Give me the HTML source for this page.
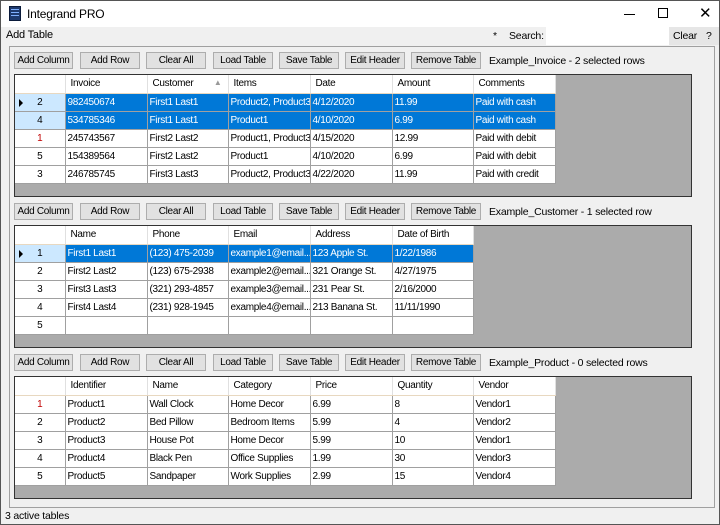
<!DOCTYPE html><html><head><style>
*{box-sizing:border-box;margin:0;padding:0}
body{width:720px;height:525px;background:#f0f0f0;font-family:"Liberation Sans",sans-serif;font-size:10.5px;color:#000;position:relative;overflow:hidden;border:1px solid #555;letter-spacing:-0.2px}
.a{position:absolute}
.title{left:0;top:0;width:718px;height:26px;background:#fff}
.btn{position:absolute;height:17px;border:1px solid #adadad;background:#e1e1e1;text-align:center;line-height:15px;font-size:10px;white-space:nowrap;overflow:hidden;letter-spacing:-0.3px}
.grid{position:absolute;left:13px;width:678px;height:123px;background:#ababab;border:1px solid #333;overflow:hidden}
table{border-collapse:collapse;table-layout:fixed;background:#fff}
td{height:18px;border-right:1px solid #a0a0a0;border-bottom:1px solid #a0a0a0;padding:0 0 0 2px;white-space:nowrap;overflow:hidden;font-size:10px;letter-spacing:-0.3px}
tr.h td{background:#fff;border-bottom:1px solid #e8d8c0;padding-left:5px;border-right:1px solid #e0e0e0}
td.rh{text-align:center;padding:0;background:#fff;position:relative}
tr.s td{background:#0078d7;color:#fff}
tr.s td.rh{background:#cce8ff;color:#000}
.red{color:#c00000}
.arr{position:absolute;left:4px;top:5px;width:0;height:0;border-left:4px solid #000;border-top:4px solid transparent;border-bottom:4px solid transparent}
.lbl{position:absolute;font-size:10.5px;white-space:nowrap}
</style></head><body>
<div class="a title"></div>
<div class="a" style="left:8px;top:5px;width:12px;height:15px;background:#1e3a6e;border:1px solid #0a1a3a"><div style="margin:2px 1px;height:1px;background:#7fb0ff"></div><div style="margin:2px 1px;height:1px;background:#7fb0ff"></div><div style="margin:2px 1px;height:1px;background:#7fb0ff"></div></div>
<div class="lbl" style="left:26px;top:6px;font-size:12px">Integrand PRO</div>
<div class="a" style="left:623px;top:13px;width:11px;height:1px;background:#000"></div>
<div class="a" style="left:657px;top:7px;width:10px;height:10px;border:1px solid #000"></div>
<div class="lbl" style="left:698px;top:3px;font-size:15px">✕</div>
<div class="lbl" style="left:5px;top:28px;font-size:11px">Add Table</div>
<div class="lbl" style="left:492px;top:29px">*</div>
<div class="lbl" style="left:508px;top:29px">Search:</div>
<div class="a" style="left:545px;top:26px;width:123px;height:18px;background:#fff"></div>
<div class="a" style="left:668px;top:26px;width:50px;height:18px;background:#e6e6e6"></div>
<div class="lbl" style="left:672px;top:29px">Clear</div>
<div class="lbl" style="left:705px;top:29px">?</div>
<div class="a" style="left:8px;top:45px;width:706px;height:462px;border:1px solid #a0a0a0"></div>

<div class="btn" style="left:13px;top:51px;width:59px">Add Column</div>
<div class="btn" style="left:79px;top:51px;width:60px">Add Row</div>
<div class="btn" style="left:145px;top:51px;width:60px">Clear All</div>
<div class="btn" style="left:212px;top:51px;width:60px">Load Table</div>
<div class="btn" style="left:278px;top:51px;width:60px">Save Table</div>
<div class="btn" style="left:344px;top:51px;width:60px">Edit Header</div>
<div class="btn" style="left:410px;top:51px;width:70px">Remove Table</div>
<div class="lbl" style="left:488px;top:54px">Example_Invoice - 2 selected rows</div>
<div class="grid" style="top:73px"><table style="width:540px"><colgroup><col style="width:50px"><col style="width:82px"><col style="width:81px"><col style="width:82px"><col style="width:82px"><col style="width:81px"><col style="width:82px"></colgroup>
<tr class="h"><td class="rh"></td><td>Invoice</td><td>Customer<span style="float:right;margin-right:6px;color:#999;font-size:8px">▲</span></td><td>Items</td><td>Date</td><td>Amount</td><td>Comments</td></tr>
<tr class="s"><td class="rh"><span class="arr"></span>2</td><td>982450674</td><td>First1 Last1</td><td>Product2, Product3</td><td>4/12/2020</td><td>11.99</td><td>Paid with cash</td></tr>
<tr class="s"><td class="rh">4</td><td>534785346</td><td>First1 Last1</td><td>Product1</td><td>4/10/2020</td><td>6.99</td><td>Paid with cash</td></tr>
<tr><td class="rh red">1</td><td>245743567</td><td>First2 Last2</td><td>Product1, Product3</td><td>4/15/2020</td><td>12.99</td><td>Paid with debit</td></tr>
<tr><td class="rh">5</td><td>154389564</td><td>First2 Last2</td><td>Product1</td><td>4/10/2020</td><td>6.99</td><td>Paid with debit</td></tr>
<tr><td class="rh">3</td><td>246785745</td><td>First3 Last3</td><td>Product2, Product3</td><td>4/22/2020</td><td>11.99</td><td>Paid with credit</td></tr>
</table></div>

<div class="btn" style="left:13px;top:202px;width:59px">Add Column</div>
<div class="btn" style="left:79px;top:202px;width:60px">Add Row</div>
<div class="btn" style="left:145px;top:202px;width:60px">Clear All</div>
<div class="btn" style="left:212px;top:202px;width:60px">Load Table</div>
<div class="btn" style="left:278px;top:202px;width:60px">Save Table</div>
<div class="btn" style="left:344px;top:202px;width:60px">Edit Header</div>
<div class="btn" style="left:410px;top:202px;width:70px">Remove Table</div>
<div class="lbl" style="left:488px;top:205px">Example_Customer - 1 selected row</div>
<div class="grid" style="top:224px"><table style="width:458px"><colgroup><col style="width:50px"><col style="width:82px"><col style="width:81px"><col style="width:82px"><col style="width:82px"><col style="width:81px"></colgroup>
<tr class="h"><td class="rh"></td><td>Name</td><td>Phone</td><td>Email</td><td>Address</td><td>Date of Birth</td></tr>
<tr class="s"><td class="rh"><span class="arr"></span>1</td><td>First1 Last1</td><td>(123) 475-2039</td><td>example1@email....</td><td>123 Apple St.</td><td>1/22/1986</td></tr>
<tr><td class="rh">2</td><td>First2 Last2</td><td>(123) 675-2938</td><td>example2@email....</td><td>321 Orange St.</td><td>4/27/1975</td></tr>
<tr><td class="rh">3</td><td>First3 Last3</td><td>(321) 293-4857</td><td>example3@email....</td><td>231 Pear St.</td><td>2/16/2000</td></tr>
<tr><td class="rh">4</td><td>First4 Last4</td><td>(231) 928-1945</td><td>example4@email....</td><td>213 Banana St.</td><td>11/11/1990</td></tr>
<tr><td class="rh">5</td><td></td><td></td><td></td><td></td><td></td></tr>
</table></div>

<div class="btn" style="left:13px;top:353px;width:59px">Add Column</div>
<div class="btn" style="left:79px;top:353px;width:60px">Add Row</div>
<div class="btn" style="left:145px;top:353px;width:60px">Clear All</div>
<div class="btn" style="left:212px;top:353px;width:60px">Load Table</div>
<div class="btn" style="left:278px;top:353px;width:60px">Save Table</div>
<div class="btn" style="left:344px;top:353px;width:60px">Edit Header</div>
<div class="btn" style="left:410px;top:353px;width:70px">Remove Table</div>
<div class="lbl" style="left:488px;top:356px">Example_Product - 0 selected rows</div>
<div class="grid" style="top:375px"><table style="width:540px"><colgroup><col style="width:50px"><col style="width:82px"><col style="width:81px"><col style="width:82px"><col style="width:82px"><col style="width:81px"><col style="width:82px"></colgroup>
<tr class="h"><td class="rh"></td><td>Identifier</td><td>Name</td><td>Category</td><td>Price</td><td>Quantity</td><td>Vendor</td></tr>
<tr><td class="rh red">1</td><td>Product1</td><td>Wall Clock</td><td>Home Decor</td><td>6.99</td><td>8</td><td>Vendor1</td></tr>
<tr><td class="rh">2</td><td>Product2</td><td>Bed Pillow</td><td>Bedroom Items</td><td>5.99</td><td>4</td><td>Vendor2</td></tr>
<tr><td class="rh">3</td><td>Product3</td><td>House Pot</td><td>Home Decor</td><td>5.99</td><td>10</td><td>Vendor1</td></tr>
<tr><td class="rh">4</td><td>Product4</td><td>Black Pen</td><td>Office Supplies</td><td>1.99</td><td>30</td><td>Vendor3</td></tr>
<tr><td class="rh">5</td><td>Product5</td><td>Sandpaper</td><td>Work Supplies</td><td>2.99</td><td>15</td><td>Vendor4</td></tr>
</table></div>
<div class="lbl" style="left:4px;top:509px">3 active tables</div>
</body></html>
